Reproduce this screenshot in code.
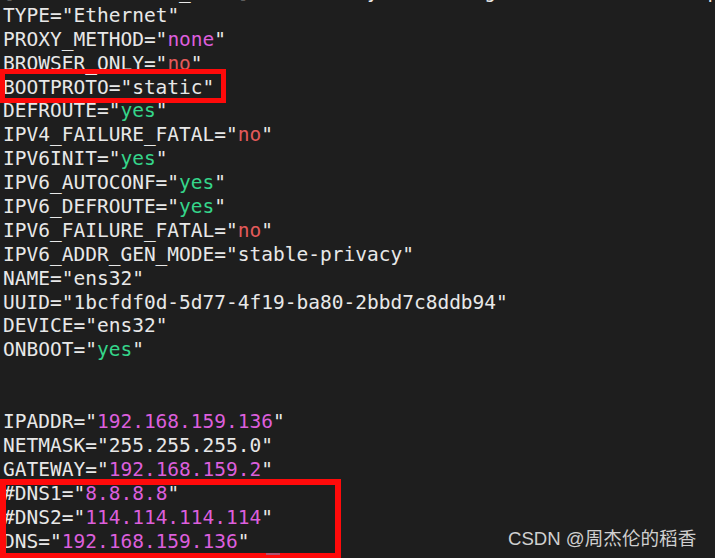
type Tok = [string, string?];

const W = '#e8e8e8';
const G = '#35d58a';
const R = '#e35a5a';
const M = '#dc5fdc';

const line = (key: string, val: string, color = W): Tok[] => [
  [`${key}="`],
  [val, color],
  ['"'],
];

const lines: Tok[][] = [
  line('TYPE', 'Ethernet'),
  line('PROXY_METHOD', 'none', M),
  line('BROWSER_ONLY', 'no', R),
  line('BOOTPROTO', 'static'),
  line('DEFROUTE', 'yes', G),
  line('IPV4_FAILURE_FATAL', 'no', R),
  line('IPV6INIT', 'yes', G),
  line('IPV6_AUTOCONF', 'yes', G),
  line('IPV6_DEFROUTE', 'yes', G),
  line('IPV6_FAILURE_FATAL', 'no', R),
  line('IPV6_ADDR_GEN_MODE', 'stable-privacy'),
  line('NAME', 'ens32'),
  line('UUID', '1bcfdf0d-5d77-4f19-ba80-2bbd7c8ddb94'),
  line('DEVICE', 'ens32'),
  line('ONBOOT', 'yes', G),
  [],
  [],
  line('IPADDR', '192.168.159.136', M),
  line('NETMASK', '255.255.255.0'),
  line('GATEWAY', '192.168.159.2', M),
  line('#DNS1', '8.8.8.8', M),
  line('#DNS2', '114.114.114.114', M),
  line('DNS', '192.168.159.136', M),
];

export default function App() {
  return (
    <div className="relative w-[715px] h-[558px] overflow-hidden bg-[#1e1e1e]">
      <pre
        className="pl-[3px] text-[19.5px] leading-[23.9px] text-[#e8e8e8] whitespace-pre"
        style={{ fontFamily: '"DejaVu Sans Mono", monospace' }}
      >
        <div className="mt-[-20px]">{'[              _    ]          y         g                  p'}</div>
        {lines.map((toks, i) => (
          <div key={i} className="h-[23.9px]">
            {toks.map(([t, c], j) => (
              <span key={j} style={c ? { color: c } : undefined}>
                {t}
              </span>
            ))}
          </div>
        ))}
      </pre>

      {/* annotation boxes */}
      <div className="absolute left-0 top-[69px] w-[226px] h-[34px] border-[5px] border-[#ff0a0a]" />
      <div className="absolute left-0 top-[479px] w-[341px] h-[80px] border-[6px] border-[#ff0a0a]" />
      <div className="absolute left-[266px] top-[553px] w-[14px] h-[2px] bg-[#b05070]" />

      {/* watermark */}
      <div
        className="absolute left-[508px] top-[527px] text-[18.6px] leading-[24px] text-[#d0d0d0]"
        style={{ fontFamily: '"Liberation Sans", "Noto Sans CJK SC", sans-serif' }}
      >
        CSDN @周杰伦的稻香
      </div>
    </div>
  );
}
